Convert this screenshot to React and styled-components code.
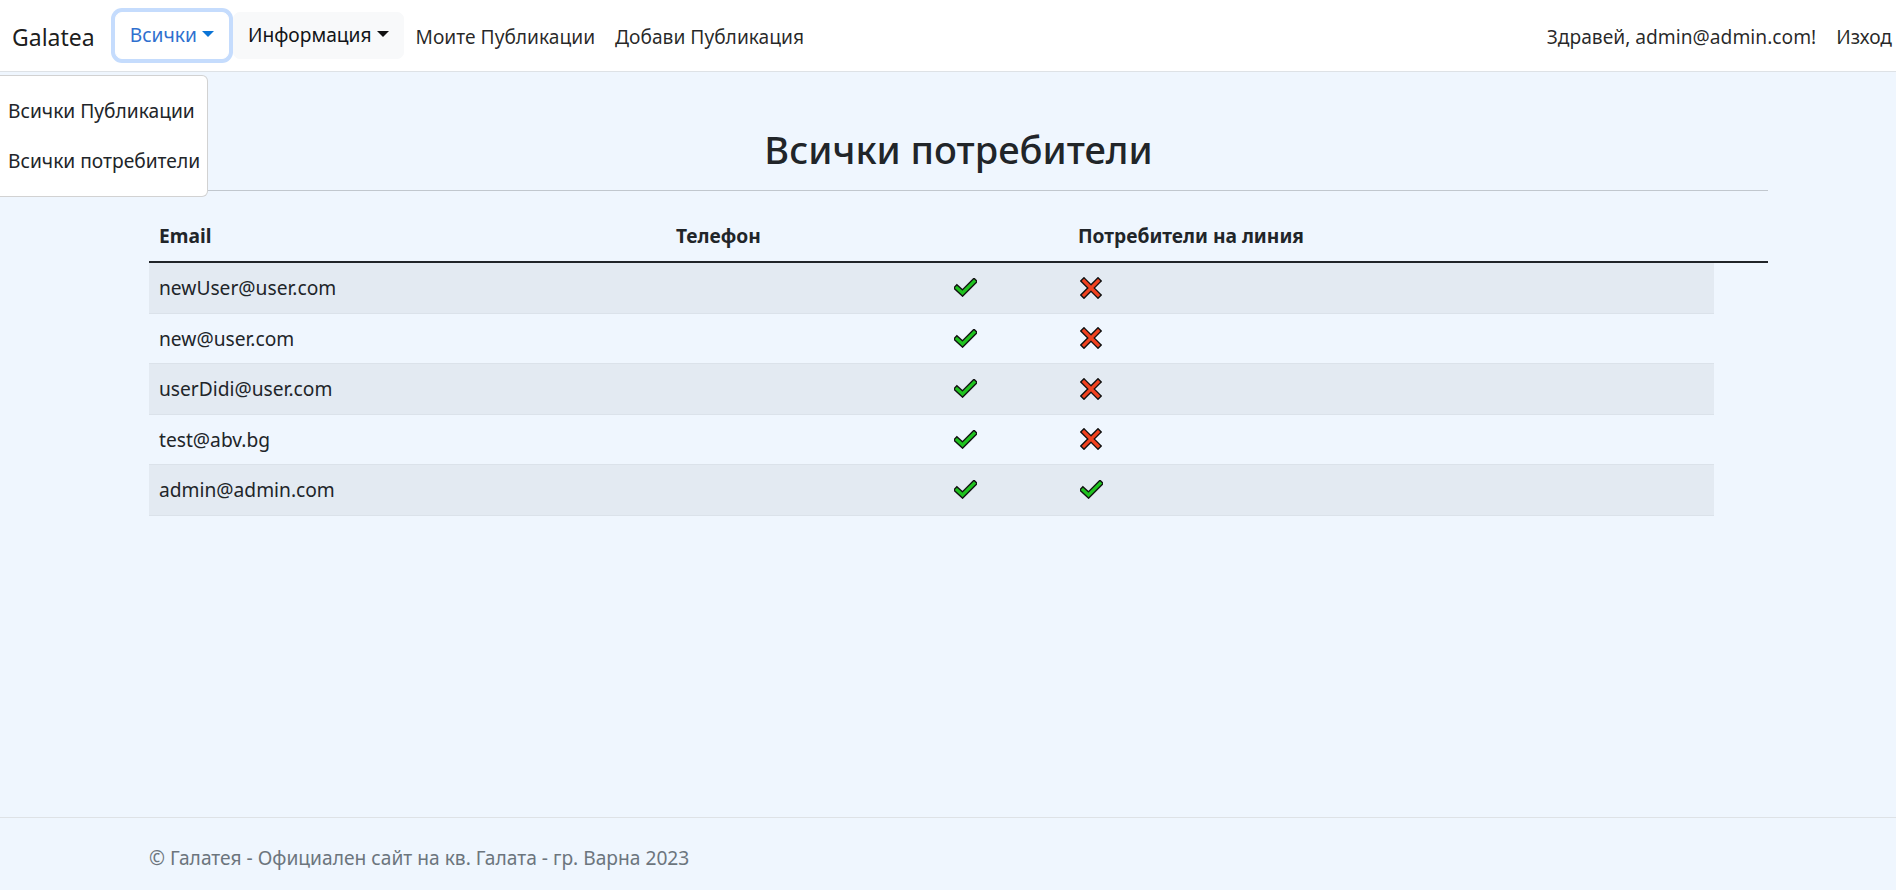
import React from "react";
import styled, { createGlobalStyle } from "styled-components";

const GlobalStyle = createGlobalStyle`
  html, body { margin: 0; padding: 0; }
  body {
    background: #eff6fe;
    font-family: "Noto Sans", "Open Sans", sans-serif;
    color: #212529;
    font-size: 19.2px;
    line-height: 1.5;
  }
  * { box-sizing: border-box; }
`;

const Page = styled.div`
  display: flex;
  flex-direction: column;
  min-height: 890px;
`;

const Navbar = styled.nav`
  position: relative;
  height: 72px;
  background: #ffffff;
  border-bottom: 1px solid #dee2e6;
  display: flex;
  align-items: center;
  padding: 3px 0 0 12px;
  white-space: nowrap;
`;

const Brand = styled.a`
  font-size: 23px;
  color: rgba(0, 0, 0, 0.9);
  margin-right: 16px;
  line-height: 1.5;
  padding-top: 1px;
`;

const NavGroup = styled.div`
  display: flex;
  align-items: center;
`;

const RightGroup = styled(NavGroup)`
  margin-left: auto;
  margin-right: -6px;
`;

const ToggleButton = styled.button`
  font-family: inherit;
  font-size: 19.2px;
  line-height: 30px;
  padding: 7.5px 14px;
  border: 1px solid ${(p) => (p.$focused ? "#ffffff" : "#f8f9fa")};
  border-radius: 7px;
  background: ${(p) => (p.$focused ? "#ffffff" : "#f8f9fa")};
  color: ${(p) => (p.$focused ? "#2f70cf" : "#111418")};
  box-shadow: ${(p) => (p.$focused ? "0 0 0 4px #c5dcfd" : "none")};
  margin: ${(p) => (p.$focused ? "-4px 4px 0 4px" : "-4px 0 0 0")};
  display: inline-flex;
  align-items: center;
  position: relative;
  z-index: ${(p) => (p.$focused ? 2 : 1)};
`;

const Caret = styled.span`
  display: inline-block;
  margin-left: 5px;
  border-top: 6px solid ${(p) => p.$color};
  border-left: 6px solid transparent;
  border-right: 6px solid transparent;
  margin-top: -2px;
`;

const NavLink = styled.a`
  padding: 0 10px;
  color: rgba(0, 0, 0, 0.85);
  font-size: 19.2px;
  line-height: 30px;
  margin-left: ${(p) => (p.$first ? "2px" : "0")};
`;

const DropdownMenu = styled.div`
  position: absolute;
  top: 75px;
  left: 0;
  width: 208px;
  padding: 10px 0;
  background: #ffffff;
  border: 1px solid rgba(0, 0, 0, 0.175);
  border-left: none;
  border-radius: 0 6px 6px 0;
  z-index: 10;
`;

const DropdownItem = styled.a`
  display: block;
  padding: 10px 8px;
  line-height: 30px;
  font-size: 19.2px;
  color: #212529;
`;

const Main = styled.main`
  flex: 1;
  padding: 53px 128px 0 149px;
`;

const Title = styled.h2`
  margin: 0;
  text-align: center;
  font-size: 38px;
  line-height: 48px;
  font-weight: 500;
`;

const Rule = styled.hr`
  margin: 17px 0 20px;
  border: 0;
  border-top: 1px solid #c1c7ce;
`;

const Table = styled.div`
  display: flex;
  flex-direction: column;
`;

const HeadRow = styled.div`
  display: grid;
  grid-template-columns: 517px 402px 1fr;
  border-bottom: 2px solid #212529;
`;

const HeadCell = styled.div`
  padding: 10px;
  font-weight: 700;
  line-height: 30px;
`;

const BodyRow = styled.div`
  display: grid;
  grid-template-columns: 517px 278px 126px 1fr;
  width: 1565px;
  background: ${(p) => (p.$striped ? "#e3eaf2" : "transparent")};
  border-bottom: 1px solid #dbe2ea;
`;

const Cell = styled.div`
  padding: 10px;
  line-height: 29.5px;
  display: flex;
  align-items: center;
`;

const Footer = styled.footer`
  height: 73px;
  border-top: 1px solid #dee2e6;
  padding: 25px 149px 0;
  color: #6c757d;
  font-size: 19.2px;
  line-height: 30px;
`;

const CheckIcon = () => (
  <svg width="23" height="19" viewBox="0 0 23 19">
    <path d="M3 10 L8.5 15 L20 3.5" fill="none" stroke="#111" strokeWidth="6" strokeLinejoin="miter" strokeLinecap="square" />
    <path d="M3 10 L8.5 15 L20 3.5" fill="none" stroke="#1fc21f" strokeWidth="3.2" strokeLinejoin="miter" strokeLinecap="square" />
  </svg>
);

const CrossIcon = () => (
  <svg width="22" height="22" viewBox="0 0 22 22">
    <path d="M4 4 L18 18 M18 4 L4 18" fill="none" stroke="#111" strokeWidth="6" strokeLinecap="square" />
    <path d="M4 4 L18 18 M18 4 L4 18" fill="none" stroke="#f2421f" strokeWidth="3.2" strokeLinecap="square" />
  </svg>
);

const users = [
  { email: "newUser@user.com", online: false },
  { email: "new@user.com", online: false },
  { email: "userDidi@user.com", online: false },
  { email: "test@abv.bg", online: false },
  { email: "admin@admin.com", online: true },
];

export default function App() {
  return (
    <>
      <GlobalStyle />
      <Page>
        <Navbar>
          <Brand>Galatea</Brand>
          <NavGroup>
            <ToggleButton $focused>
              Всички<Caret $color="#0b74d6" />
            </ToggleButton>
            <ToggleButton>
              Информация<Caret $color="#111" />
            </ToggleButton>
            <NavLink $first>Моите Публикации</NavLink>
            <NavLink>Добави Публикация</NavLink>
          </NavGroup>
          <RightGroup>
            <NavLink>Здравей, admin@admin.com!</NavLink>
            <NavLink>Изход</NavLink>
          </RightGroup>
          <DropdownMenu>
            <DropdownItem>Всички Публикации</DropdownItem>
            <DropdownItem>Всички потребители</DropdownItem>
          </DropdownMenu>
        </Navbar>
        <Main>
          <Title>Всички потребители</Title>
          <Rule />
          <Table>
            <HeadRow>
              <HeadCell>Email</HeadCell>
              <HeadCell>Телефон</HeadCell>
              <HeadCell>Потребители на линия</HeadCell>
            </HeadRow>
            {users.map((u, i) => (
              <BodyRow key={u.email} $striped={i % 2 === 0}>
                <Cell>{u.email}</Cell>
                <Cell />
                <Cell>
                  <CheckIcon />
                </Cell>
                <Cell>{u.online ? <CheckIcon /> : <CrossIcon />}</Cell>
              </BodyRow>
            ))}
          </Table>
        </Main>
        <Footer>© Галатея - Официален сайт на кв. Галата - гр. Варна 2023</Footer>
      </Page>
    </>
  );
}
